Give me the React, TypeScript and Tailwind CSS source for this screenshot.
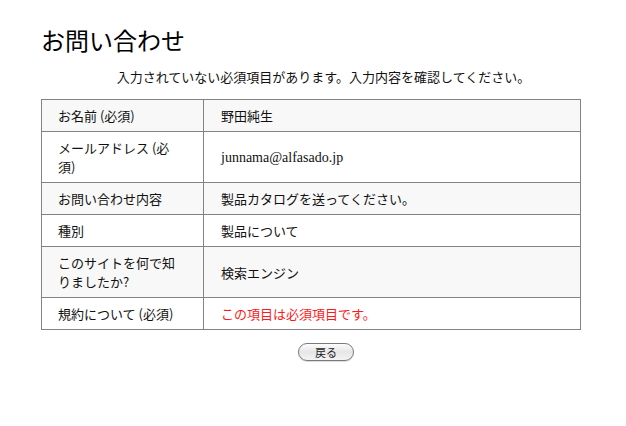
const rows: { label: string; value: string; error?: boolean; serif?: boolean }[] = [
  { label: "お名前 (必須)", value: "野田純生" },
  { label: "メールアドレス (必須)", value: "junnama@alfasado.jp", serif: true },
  { label: "お問い合わせ内容", value: "製品カタログを送ってください。" },
  { label: "種別", value: "製品について" },
  { label: "このサイトを何で知りましたか?", value: "検索エンジン" },
  { label: "規約について (必須)", value: "この項目は必須項目です。", error: true },
];

export default function App() {
  return (
    <div className="min-h-[426px] w-[626px] bg-white pl-[41px] pt-[26px] font-['Noto_Sans_CJK_JP',sans-serif] text-[13px] text-[#111]">
      <h1 className="text-[24px] leading-[28px] font-normal text-black">お問い合わせ</h1>
      <p className="mt-[14px] w-[540px] pl-[25px] text-center leading-[18px]">
        入力されていない必須項目があります。入力内容を確認してください。
      </p>
      <table className="mt-[13px] w-[540px] border-collapse">
        <tbody>
          {rows.map((row, i) => (
            <tr key={row.label} className={i % 2 === 0 ? "bg-[#f8f8f8]" : "bg-white"}>
              <td className="w-[162px] border border-[#838383] py-[6px] pl-[16px] pr-[24px] align-middle leading-[19px]">
                {row.label}
              </td>
              <td
                className={
                  "border border-[#838383] py-[6px] pl-[17px] pr-[10px] align-middle leading-[19px] " +
                  (row.error ? "text-[#ff1a1a]" : "") +
                  (row.serif ? " font-['Liberation_Serif',serif] text-[14px]" : "")
                }
              >
                {row.value}
              </td>
            </tr>
          ))}
        </tbody>
      </table>
      <div className="mt-[13px] flex w-[540px] justify-center pl-[30px]">
        <button
          type="button"
          className="h-[18px] w-[56px] rounded-full border border-[#7a7a7a] bg-gradient-to-b from-[#fdfdfd] via-[#e6e6e6] to-[#f4f4f4] text-[11px] leading-[16px] text-[#222] shadow-[0_1px_1px_rgba(0,0,0,0.15)]"
        >
          戻る
        </button>
      </div>
    </div>
  );
}
